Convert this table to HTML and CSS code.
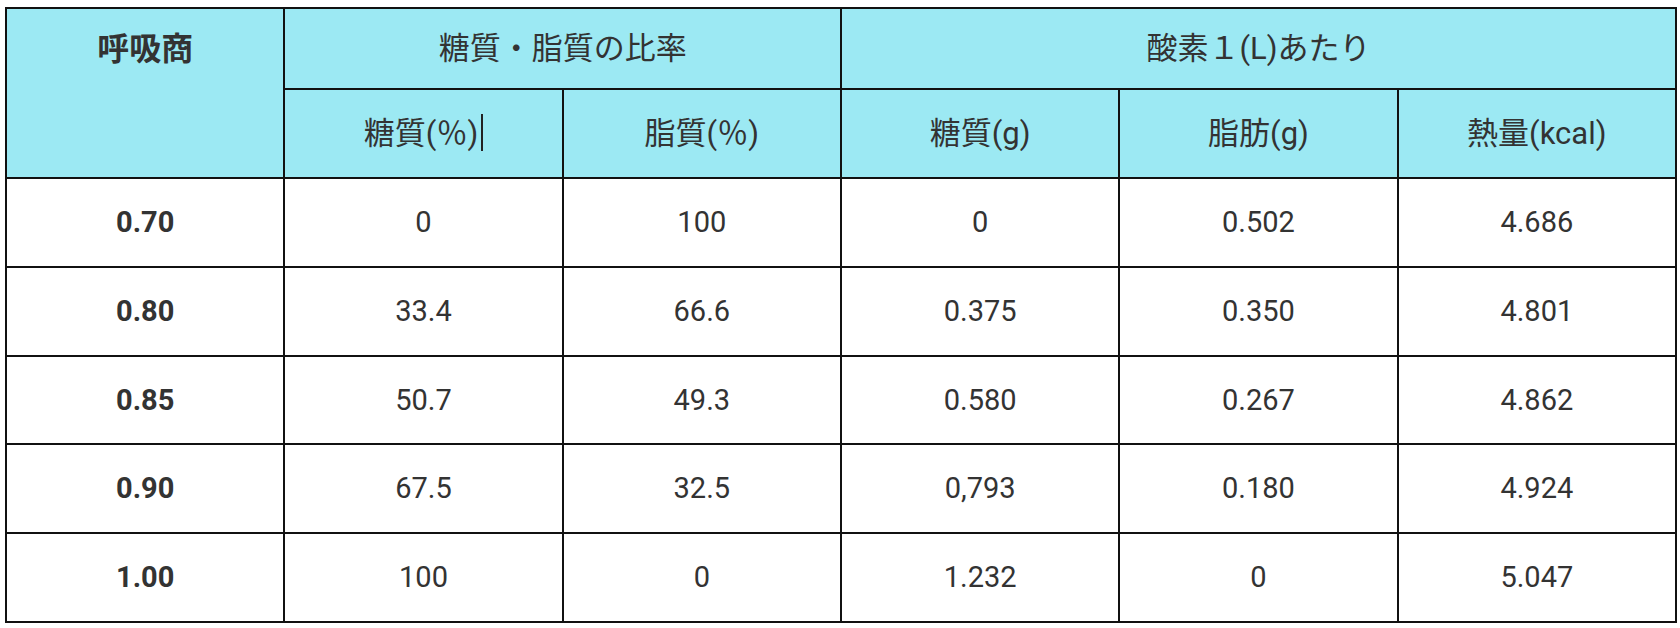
FILE: index.html
```html
<!DOCTYPE html>
<html lang="ja">
<head>
<meta charset="utf-8">
<link rel="stylesheet" href="styles.css">
</head>
<body>
<table class="rq">
  <colgroup>
    <col><col><col><col><col><col>
  </colgroup>
  <thead>
    <tr class="h1">
      <th rowspan="2" class="rq-head">呼吸商</th>
      <th colspan="2">糖質・脂質の比率</th>
      <th colspan="3">酸素１(L)あたり</th>
    </tr>
    <tr class="h2">
      <th>糖質(％)<span class="caret"></span></th>
      <th>脂質(％)</th>
      <th>糖質(g)</th>
      <th>脂肪(g)</th>
      <th>熱量(kcal)</th>
    </tr>
  </thead>
  <tbody>
    <tr><td class="q">0.70</td><td>0</td><td>100</td><td>0</td><td>0.502</td><td>4.686</td></tr>
    <tr><td class="q">0.80</td><td>33.4</td><td>66.6</td><td>0.375</td><td>0.350</td><td>4.801</td></tr>
    <tr><td class="q">0.85</td><td>50.7</td><td>49.3</td><td>0.580</td><td>0.267</td><td>4.862</td></tr>
    <tr><td class="q">0.90</td><td>67.5</td><td>32.5</td><td>0,793</td><td>0.180</td><td>4.924</td></tr>
    <tr><td class="q">1.00</td><td>100</td><td>0</td><td>1.232</td><td>0</td><td>5.047</td></tr>
  </tbody>
</table>
</body>
</html>
```
FILE: styles.css
```css
html, body {
  margin: 0;
  padding: 0;
  background: #ffffff;
}
body {
  padding: 7px 0 0 5px;
  font-family: Roboto, "Noto Sans CJK JP", sans-serif;
  color: #333333;
}
.rq {
  border-collapse: collapse;
  table-layout: fixed;
  width: 1672px;
  font-size: 29px;
}
.rq th, .rq td {
  border: 2px solid #111111;
  text-align: center;
  padding: 0;
  font-weight: 400;
  line-height: 1.2;
}
.rq th {
  background: #9ce9f3;
  font-size: 31px;
}
.rq .h1 th {
  height: 79px;
}
.rq .h2 th {
  height: 87px;
}
.rq th.rq-head {
  vertical-align: top;
  padding-top: 21px;
  font-weight: 700;
  font-size: 32px;
}
.rq td {
  height: 86.8px;
}
.rq td.q {
  font-weight: 700;
}
.caret {
  display: inline-block;
  width: 0;
  height: 37px;
  border-left: 2px solid #222;
  vertical-align: -7px;
  margin-left: 3px;
}
```
